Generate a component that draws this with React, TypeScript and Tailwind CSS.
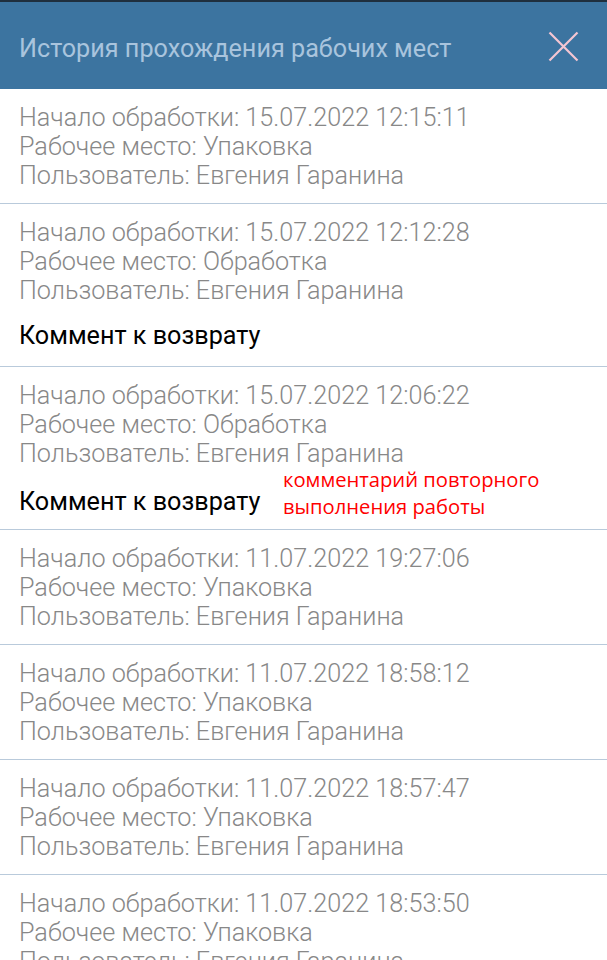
const rows = [
  { start: "15.07.2022 12:15:11", place: "Упаковка", comment: false, note: false },
  { start: "15.07.2022 12:12:28", place: "Обработка", comment: true, note: false },
  { start: "15.07.2022 12:06:22", place: "Обработка", comment: true, note: true },
  { start: "11.07.2022 19:27:06", place: "Упаковка", comment: false, note: false },
  { start: "11.07.2022 18:58:12", place: "Упаковка", comment: false, note: false },
  { start: "11.07.2022 18:57:47", place: "Упаковка", comment: false, note: false },
  { start: "11.07.2022 18:53:50", place: "Упаковка", comment: false, note: false },
];

export default function App() {
  return (
    <main className="w-[607px] h-[960px] overflow-hidden bg-white font-['Roboto',sans-serif]">
      <header className="h-[89px] bg-[#3c74a0] border-t-2 border-[#1f2f3e] flex items-center justify-between pl-[19px] pr-[28px] pt-[6px]">
        <h1 className="text-[25.2px] text-[#a9c4dd] leading-none">История прохождения рабочих мест</h1>
        <svg width="31" height="31" viewBox="0 0 31 31" className="shrink-0 -mt-[4px]">
          <path d="M1.5 1.5L29.5 29.5M29.5 1.5L1.5 29.5" stroke="#f5c6d2" strokeWidth="2.2" />
        </svg>
      </header>
      <ul>
        {rows.map((r, i) => (
          <li key={i} className="relative border-b border-[#b9cadb] pl-[19px] pt-[14px] pb-[13px]">
            <div className="text-[25.2px] leading-[29px] font-light text-[#888888]">
              <p>Начало обработки: {r.start}</p>
              <p>Рабочее место: {r.place}</p>
              <p>Пользователь: Евгения Гаранина</p>
            </div>
            {r.comment && (
              <p className={`text-[25.2px] leading-[29px] text-black ${r.note ? "mt-[19px] mb-0" : "mt-[16px] mb-[3px]"}`}>
                Коммент к возврату
              </p>
            )}
            {r.note && (
              <div className="absolute left-[283px] top-[99px] text-[20.2px] leading-[27px] text-[#ff0000] font-['Open_Sans',sans-serif]">
                <p>комментарий повторного</p>
                <p>выполнения работы</p>
              </div>
            )}
          </li>
        ))}
      </ul>
    </main>
  );
}
